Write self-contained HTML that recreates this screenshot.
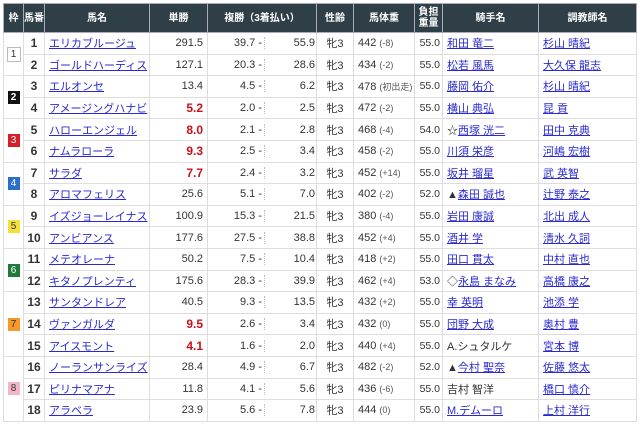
<!DOCTYPE html>
<html><head><meta charset="utf-8"><style>
body{margin:0;background:#fff;font-family:"Liberation Sans","Noto Sans CJK JP",sans-serif;font-size:11px;color:#333}
table{position:absolute;left:3px;top:3px;width:633px;border-collapse:collapse;table-layout:fixed}
th{background:#2e3f47;color:#fff;font-size:10px;font-weight:bold;height:28px;padding:0;border:1px solid #aab;line-height:11px}
td{border:1px solid #ddd;height:20.6px;padding:0 4px;white-space:nowrap;overflow:hidden;vertical-align:middle}
.w{text-align:center;padding:0}
.b{display:inline-block;width:12px;height:13px;line-height:13px;font-size:10px;text-align:center}
.n{text-align:center;font-weight:bold;font-size:12px;padding:0}
a{color:#2a2ad0;text-decoration:underline}
.r{text-align:right}
.red{color:#c8101a;font-weight:bold;font-size:12px}
.f{padding:0}
.f span{display:inline-block;text-align:right;box-sizing:border-box}
.f .l{width:57px;padding-right:2px;border-right:1px dotted #bbb}
.f .rr{width:50px}
.c{text-align:center}
.g{color:#555;font-size:9px}
.k{padding:0 2px 0 0;text-align:right;font-size:10.5px;line-height:20px}
.wt{padding:0 2px 0 4px}
</style></head><body>
<table>
<colgroup><col style="width:20px"><col style="width:21px"><col style="width:105px"><col style="width:58px"><col style="width:109px"><col style="width:37px"><col style="width:61px"><col style="width:28px"><col style="width:96px"><col style="width:98px"></colgroup>
<tr><th>枠</th><th>馬番</th><th>馬名</th><th>単勝</th><th>複勝（3着払い）</th><th>性齢</th><th>馬体重</th><th>負担<br>重量</th><th>騎手名</th><th>調教師名</th></tr>
<tr><td class="w" rowspan="2"><span class="b" style="border:1px solid #bbb;background:#fff">1</span></td><td class="n">1</td><td><a>エリカブルージュ</a></td><td class="r">291.5</td><td class="f"><span class="l">39.7 -</span><span class="rr">55.9</span></td><td class="c">牝3</td><td class="wt">442 <span class="g">(-8)</span></td><td class="k">55.0</td><td><a>和田 竜二</a></td><td><a>杉山 晴紀</a></td></tr>
<tr><td class="n">2</td><td><a>ゴールドハーディス</a></td><td class="r">127.1</td><td class="f"><span class="l">20.3 -</span><span class="rr">28.6</span></td><td class="c">牝3</td><td class="wt">434 <span class="g">(-2)</span></td><td class="k">55.0</td><td><a>松若 風馬</a></td><td><a>大久保 龍志</a></td></tr>
<tr><td class="w" rowspan="2"><span class="b" style="background:#111;color:#fff;font-weight:bold">2</span></td><td class="n">3</td><td><a>エルオンセ</a></td><td class="r">13.4</td><td class="f"><span class="l">4.5 -</span><span class="rr">6.2</span></td><td class="c">牝3</td><td class="wt">478 <span class="g">(初出走)</span></td><td class="k">55.0</td><td><a>藤岡 佑介</a></td><td><a>杉山 晴紀</a></td></tr>
<tr><td class="n">4</td><td><a>アメージングハナビ</a></td><td class="r red">5.2</td><td class="f"><span class="l">2.0 -</span><span class="rr">2.5</span></td><td class="c">牝3</td><td class="wt">472 <span class="g">(-2)</span></td><td class="k">55.0</td><td><a>横山 典弘</a></td><td><a>昆 貢</a></td></tr>
<tr><td class="w" rowspan="2"><span class="b" style="background:#d4202a;color:#fff">3</span></td><td class="n">5</td><td><a>ハローエンジェル</a></td><td class="r red">8.0</td><td class="f"><span class="l">2.1 -</span><span class="rr">2.8</span></td><td class="c">牝3</td><td class="wt">468 <span class="g">(-4)</span></td><td class="k">54.0</td><td>☆<a>西塚 洸二</a></td><td><a>田中 克典</a></td></tr>
<tr><td class="n">6</td><td><a>ナムラローラ</a></td><td class="r red">9.3</td><td class="f"><span class="l">2.5 -</span><span class="rr">3.4</span></td><td class="c">牝3</td><td class="wt">458 <span class="g">(-2)</span></td><td class="k">55.0</td><td><a>川須 栄彦</a></td><td><a>河嶋 宏樹</a></td></tr>
<tr><td class="w" rowspan="2"><span class="b" style="background:#2a6fc8;color:#fff">4</span></td><td class="n">7</td><td><a>サラダ</a></td><td class="r red">7.7</td><td class="f"><span class="l">2.4 -</span><span class="rr">3.2</span></td><td class="c">牝3</td><td class="wt">452 <span class="g">(+14)</span></td><td class="k">55.0</td><td><a>坂井 瑠星</a></td><td><a>武 英智</a></td></tr>
<tr><td class="n">8</td><td><a>アロマフェリス</a></td><td class="r">25.6</td><td class="f"><span class="l">5.1 -</span><span class="rr">7.0</span></td><td class="c">牝3</td><td class="wt">402 <span class="g">(-2)</span></td><td class="k">52.0</td><td>▲<a>森田 誠也</a></td><td><a>辻野 泰之</a></td></tr>
<tr><td class="w" rowspan="2"><span class="b" style="background:#f5e03a;color:#333">5</span></td><td class="n">9</td><td><a>イズジョーレイナス</a></td><td class="r">100.9</td><td class="f"><span class="l">15.3 -</span><span class="rr">21.5</span></td><td class="c">牝3</td><td class="wt">380 <span class="g">(-4)</span></td><td class="k">55.0</td><td><a>岩田 康誠</a></td><td><a>北出 成人</a></td></tr>
<tr><td class="n">10</td><td><a>アンビアンス</a></td><td class="r">177.6</td><td class="f"><span class="l">27.5 -</span><span class="rr">38.8</span></td><td class="c">牝3</td><td class="wt">452 <span class="g">(+4)</span></td><td class="k">55.0</td><td><a>酒井 学</a></td><td><a>清水 久詞</a></td></tr>
<tr><td class="w" rowspan="2"><span class="b" style="background:#1f7a3a;color:#fff">6</span></td><td class="n">11</td><td><a>メテオレーナ</a></td><td class="r">50.2</td><td class="f"><span class="l">7.5 -</span><span class="rr">10.4</span></td><td class="c">牝3</td><td class="wt">418 <span class="g">(+2)</span></td><td class="k">55.0</td><td><a>田口 貫太</a></td><td><a>中村 直也</a></td></tr>
<tr><td class="n">12</td><td><a>キタノプレンティ</a></td><td class="r">175.6</td><td class="f"><span class="l">28.3 -</span><span class="rr">39.9</span></td><td class="c">牝3</td><td class="wt">462 <span class="g">(+4)</span></td><td class="k">53.0</td><td>◇<a>永島 まなみ</a></td><td><a>高橋 康之</a></td></tr>
<tr><td class="w" rowspan="3"><span class="b" style="background:#f59a2a;color:#333">7</span></td><td class="n">13</td><td><a>サンタンドレア</a></td><td class="r">40.5</td><td class="f"><span class="l">9.3 -</span><span class="rr">13.5</span></td><td class="c">牝3</td><td class="wt">432 <span class="g">(+2)</span></td><td class="k">55.0</td><td><a>幸 英明</a></td><td><a>池添 学</a></td></tr>
<tr><td class="n">14</td><td><a>ヴァンガルダ</a></td><td class="r red">9.5</td><td class="f"><span class="l">2.6 -</span><span class="rr">3.4</span></td><td class="c">牝3</td><td class="wt">432 <span class="g">(0)</span></td><td class="k">55.0</td><td><a>団野 大成</a></td><td><a>奥村 豊</a></td></tr>
<tr><td class="n">15</td><td><a>アイスモント</a></td><td class="r red">4.1</td><td class="f"><span class="l">1.6 -</span><span class="rr">2.0</span></td><td class="c">牝3</td><td class="wt">440 <span class="g">(+4)</span></td><td class="k">55.0</td><td>A.シュタルケ</td><td><a>宮本 博</a></td></tr>
<tr><td class="w" rowspan="3"><span class="b" style="background:#f4b6c6;color:#333">8</span></td><td class="n">16</td><td><a>ノーランサンライズ</a></td><td class="r">28.4</td><td class="f"><span class="l">4.9 -</span><span class="rr">6.7</span></td><td class="c">牝3</td><td class="wt">482 <span class="g">(-2)</span></td><td class="k">52.0</td><td>▲<a>今村 聖奈</a></td><td><a>佐藤 悠太</a></td></tr>
<tr><td class="n">17</td><td><a>ピリナマアナ</a></td><td class="r">11.8</td><td class="f"><span class="l">4.1 -</span><span class="rr">5.6</span></td><td class="c">牝3</td><td class="wt">436 <span class="g">(-6)</span></td><td class="k">55.0</td><td>吉村 智洋</td><td><a>橋口 慎介</a></td></tr>
<tr><td class="n">18</td><td><a>アラベラ</a></td><td class="r">23.9</td><td class="f"><span class="l">5.6 -</span><span class="rr">7.8</span></td><td class="c">牝3</td><td class="wt">444 <span class="g">(0)</span></td><td class="k">55.0</td><td><a>M.デムーロ</a></td><td><a>上村 洋行</a></td></tr>
</table>
</body></html>
